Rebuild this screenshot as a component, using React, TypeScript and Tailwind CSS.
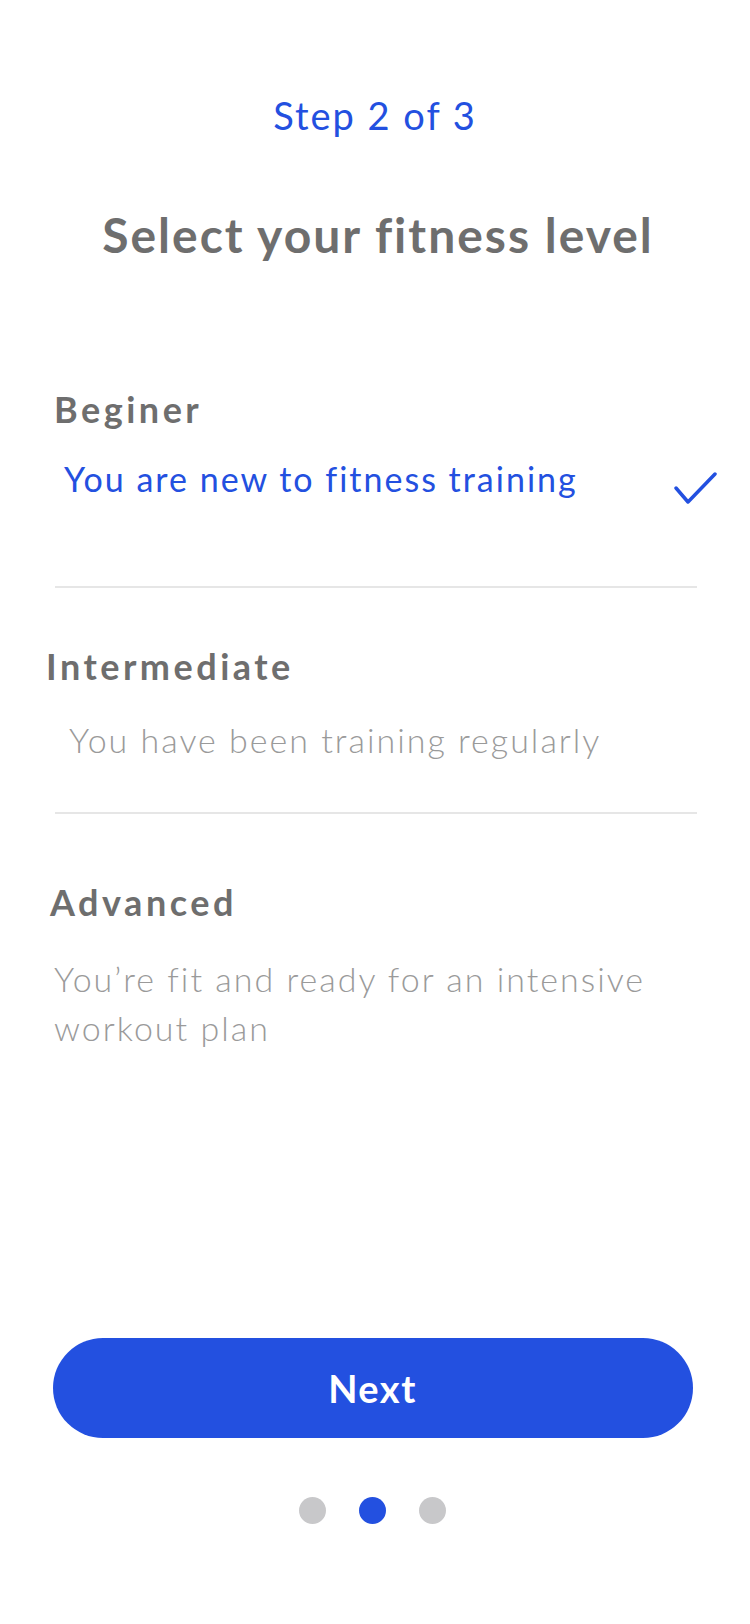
const levels = [
  {
    title: 'Beginer',
    desc: 'You are new to fitness training',
    selected: true,
  },
];

export default function App() {
  return (
    <div className="w-[750px] h-[1624px] bg-white flex flex-col font-['Lato',sans-serif]">
      <div className="pt-[92px] text-center text-[38px] leading-[46px] tracking-[2px] text-[#2350e0]">Step 2 of 3</div>
      <h1 className="mt-[69px] pl-[6px] text-center text-[48px] leading-[56px] tracking-[2px] font-bold text-[#6e6e6e]">
        Select your fitness level
      </h1>

      {/* Beginer */}
      <div className="mt-[124px] pl-[54px] text-[36px] leading-[44px] tracking-[3.5px] font-bold text-[#6e6e6e]">
        {levels[0].title}
      </div>
      <div className="mt-[26px] flex items-center justify-between pl-[64px] pr-[33px]">
        <span className="text-[34px] leading-[44px] tracking-[2px] text-[#2350e0]">{levels[0].desc}</span>
        <svg width="43" height="33" viewBox="0 0 43 33" fill="none" className="translate-y-[9px]">
          <polyline
            points="2,16 14,30 41,2"
            stroke="#2350e0"
            strokeWidth="3.5"
            strokeLinecap="round"
            strokeLinejoin="round"
          />
        </svg>
      </div>
      <div className="mt-[85px] ml-[55px] w-[642px] h-[2px] bg-[#e6e6e6]" />

      {/* Intermediate */}
      <div className="mt-[56px] pl-[46px] text-[36px] leading-[44px] tracking-[3.5px] font-bold text-[#6e6e6e]">
        Intermediate
      </div>
      <div className="mt-[30px] pl-[69px] text-[34px] leading-[44px] tracking-[2px] font-light text-[#9a9a9a]">
        You have been training regularly
      </div>
      <div className="mt-[50px] ml-[55px] w-[642px] h-[2px] bg-[#e6e6e6]" />

      {/* Advanced */}
      <div className="mt-[66px] pl-[50px] text-[36px] leading-[44px] tracking-[3.5px] font-bold text-[#6e6e6e]">
        Advanced
      </div>
      <div className="mt-[30px] pl-[54px] pr-[70px] text-[34px] leading-[49px] tracking-[2px] font-light text-[#9a9a9a]">
        You&rsquo;re fit and ready for an intensive workout plan
      </div>

      <div className="mt-auto flex flex-col items-center pb-[100px] pr-[5px]">
        <button className="w-[640px] h-[100px] rounded-full bg-[#2350e0] text-white text-[38px] tracking-[1.5px] font-bold">
          Next
        </button>
        <div className="mt-[59px] flex gap-[33px]">
          <span className="w-[27px] h-[27px] rounded-full bg-[#c8c8ca]" />
          <span className="w-[27px] h-[27px] rounded-full bg-[#2350e0]" />
          <span className="w-[27px] h-[27px] rounded-full bg-[#c8c8ca]" />
        </div>
      </div>
    </div>
  );
}
